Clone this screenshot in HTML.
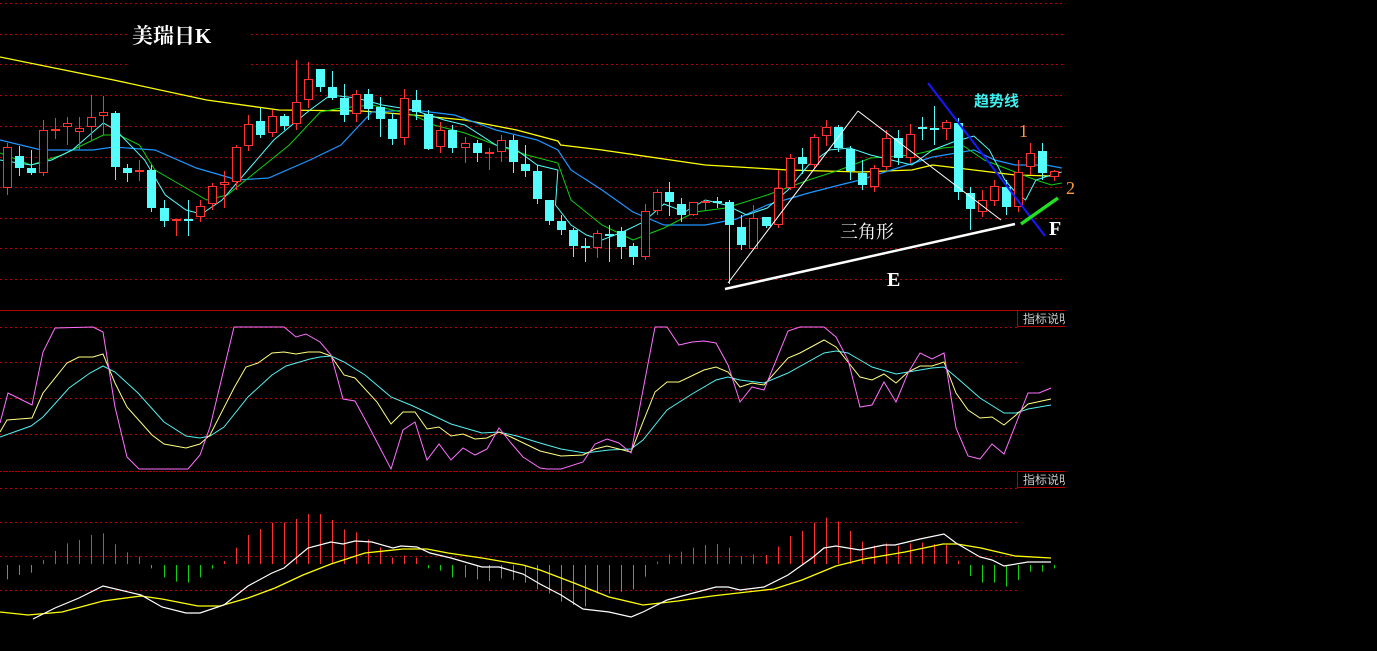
<!DOCTYPE html>
<html><head><meta charset="utf-8"><style>
html,body{margin:0;padding:0;background:#000;width:1377px;height:651px;overflow:hidden}
svg{position:absolute;left:0;top:0}
.t{font-family:"Liberation Serif","Noto Serif CJK SC",serif}
</style></head><body>
<svg id="s" width="1377" height="651" viewBox="0 0 1377 651" xmlns="http://www.w3.org/2000/svg">
<g id="grid" stroke="#b80000" stroke-width="1" stroke-dasharray="2 3"></g>
<line x1="0" y1="310.5" x2="1065" y2="310.5" stroke="#b00000"/>
<line x1="0" y1="471.5" x2="1065" y2="471.5" stroke="#b00000" stroke-dasharray="2 1"/>
<rect x="1017.5" y="310.5" width="50" height="16" fill="#000" stroke="#b00000"/>
<rect x="1017.5" y="471.5" width="50" height="16" fill="#000" stroke="#b00000"/>
<text x="1023" y="323" fill="#c8c8c8" font-size="12" font-family="'Liberation Sans','Noto Sans CJK SC',sans-serif">指标说明</text>
<text x="1023" y="484" fill="#c8c8c8" font-size="12" font-family="'Liberation Sans','Noto Sans CJK SC',sans-serif">指标说明</text>
<rect x="1065" y="305" width="12" height="190" fill="#000"/>
<g id="ma" fill="none" stroke-width="1.2"></g>
<g id="cd"></g>
<g id="kdj" fill="none" stroke-width="1"></g>
<g id="macd"></g>
<text class="t" x="132" y="43" fill="#fff" font-size="21" font-weight="bold">美瑞日K</text>
<line x1="728" y1="283" x2="858" y2="111" stroke="#fff" stroke-width="1"/>
<line x1="858" y1="111" x2="1001" y2="220" stroke="#fff" stroke-width="1"/>
<line x1="725" y1="289" x2="1015" y2="224" stroke="#fff" stroke-width="2.5"/>
<line x1="928" y1="83" x2="1045" y2="236" stroke="#1818ff" stroke-width="2"/>
<line x1="1021" y1="224" x2="1058" y2="198" stroke="#22e022" stroke-width="3.5"/>
<text x="974" y="106" fill="#40f0f0" font-size="15" font-weight="bold" font-family="'Liberation Sans','Noto Sans CJK SC',sans-serif">趋势线</text>
<text class="t" x="1019" y="137" fill="#ff9a3c" font-size="18">1</text>
<text class="t" x="1066" y="194" fill="#ff9a3c" font-size="18">2</text>
<text class="t" x="1049" y="235" fill="#fff" font-size="20" font-weight="bold">F</text>
<text class="t" x="840" y="238" fill="#fff" font-size="18">三角形</text>
<text class="t" x="887" y="286" fill="#fff" font-size="20" font-weight="bold">E</text>
</svg>
<script>
var NS="http://www.w3.org/2000/svg";
function el(p,t,a){var e=document.createElementNS(NS,t);for(var k in a)e.setAttribute(k,a[k]);p.appendChild(e);return e;}
var g=document.getElementById('grid');
[3,34,64,95,126,157,187,218,248,279].forEach(function(y){
 if(y==34||y==64){el(g,'line',{x1:0,y1:y+.5,x2:130,y2:y+.5});el(g,'line',{x1:251,y1:y+.5,x2:1065,y2:y+.5});}
 else el(g,'line',{x1:0,y1:y+.5,x2:1065,y2:y+.5});});
[327,362,398,434,488,522,556,590].forEach(function(y){el(g,'line',{x1:0,y1:y+.5,x2:1017,y2:y+.5});});
function fx1(a){return a.map(function(p){return [p[0]*1.0331,p[1]]});}
function fx2(a){return a.map(function(p){return [540+(p[0]-540)*1.0331,p[1]]});}
function pl(par,pts,col,w){el(par,'polyline',{points:pts.map(function(p){return p.join(',')}).join(' '),stroke:col,'stroke-width':w||1,fill:'none'});}
var ma=document.getElementById('ma');
var Y=fx1([[0,57],[110,80],[200,100],[270,110],[350,111],[400,115],[450,120],[500,130],[540,141]]).concat(fx2([[560,145],[600,150],[700,165],[780,170],[850,172],[900,170],[920,165],[960,170],[1000,175],[1035,176]]));
var B=fx1([[0,140],[40,150],[90,150],[110,147],[150,150],[190,168],[230,180],[260,178],[300,160],[330,145],[360,112],[400,110],[440,115],[480,130],[520,140],[540,150]]).concat(fx2([[570,170],[600,190],[630,212],[660,225],[700,225],[730,219],[760,205],[800,193],[830,185],[850,180],[880,170],[920,157],[960,150],[980,160],[1000,165],[1030,165],[1045,168]]));
var G=fx1([[0,153],[30,165],[60,155],[80,145],[100,135],[115,135],[135,145],[150,170],[175,185],[200,200],[220,195],[250,170],[280,145],[310,112],[330,108],[360,105],[400,115],[420,125],[450,133],[480,145],[510,155],[540,163]]).concat(fx2([[570,200],[600,225],[630,240],[660,228],[690,212],[720,208],[760,195],[800,180],[830,170],[860,158],[900,155],[930,148],[950,146],[970,160],[1000,172],[1020,180],[1035,185],[1045,183]]));
var C=fx1([[0,160],[30,165],[50,160],[70,150],[100,123],[112,130],[140,160],[160,195],[180,210],[195,214],[215,200],[240,170],[265,140],[300,110],[320,95],[345,98],[370,105],[400,110],[430,120],[450,125],[480,145],[500,150],[520,165],[540,170]]).concat(fx2([[555,205],[570,225],[585,235],[600,240],[620,232],[640,222],[660,204],[680,212],[700,200],[720,205],[740,215],[760,208],[780,190],[800,165],[820,150],[840,148],[860,155],[880,160],[900,165],[920,150],[940,142],[960,136],[975,150],[990,180],[1000,192],[1010,200],[1020,180],[1035,175],[1045,172]]));
pl(ma,Y,'#ffff00',1.3);pl(ma,B,'#1e96ff',1.2);pl(ma,G,'#10d010',1);pl(ma,C,'#54fcfc',1);
var D=[[147,188,143,195,'r'],[156,168,146,176,'c'],[168,173,150,175,'c'],[130,173,120,176,'r'],[129,131,118,139,'r'],[123,127,117,145,'r'],[128,132,117,150,'r'],[117,127,95,140,'r'],[112,116,96,135,'r'],[113,167,111,180,'c'],[168,173,164,182,'c'],[170,172,160,181,'r'],[170,208,165,212,'c'],[208,221,200,227,'c'],[219,221,219,236,'r'],[219,221,200,236,'c'],[206,217,200,222,'r'],[186,204,183,210,'r'],[182,185,171,208,'r'],[147,182,145,190,'r'],[124,146,115,151,'r'],[121,135,108,138,'c'],[116,133,110,137,'r'],[116,126,114,130,'c'],[102,124,60,130,'r'],[79,100,62,108,'r'],[69,87,69,92,'c'],[87,98,71,100,'c'],[98,115,84,122,'c'],[94,114,90,122,'r'],[94,109,89,120,'c'],[107,119,97,137,'c'],[119,139,113,145,'c'],[98,138,89,145,'r'],[100,112,90,120,'c'],[114,149,110,150,'c'],[130,147,122,153,'r'],[130,148,125,153,'c'],[143,148,137,163,'r'],[143,153,140,162,'c'],[152,154,148,170,'r'],[140,152,135,162,'r'],[140,162,135,173,'c'],[164,171,145,177,'c'],[171,199,165,204,'c'],
[200,221,200,225,'c'],[221,230,215,235,'c'],[230,246,228,257,'c'],[246,248,238,262,'c'],[233,248,230,258,'r'],[234,236,225,262,'c'],[231,247,227,259,'c'],[246,257,243,265,'c'],[211,257,204,260,'r'],[192,211,189,215,'r'],[192,202,182,216,'c'],[204,215,198,222,'c'],[202,215,203,216,'r'],[201,203,200,210,'r'],[201,203,197,208,'c'],[202,225,200,284,'c'],[227,245,215,250,'c'],[218,249,205,250,'r'],[217,226,217,228,'c'],[188,225,170,228,'r'],[158,188,154,190,'r'],[157,164,148,174,'c'],[137,165,134,168,'r'],[127,136,120,146,'r'],[127,148,125,152,'c'],[149,171,146,180,'c'],[173,185,160,190,'c'],[168,187,165,192,'r'],[138,167,130,170,'r'],[138,158,130,165,'c'],[134,158,124,163,'r'],[127,129,117,140,'c'],[128,130,106,145,'c'],[122,129,120,140,'r'],[123,192,118,200,'c'],[193,209,187,230,'c'],[200,212,190,217,'r'],[186,201,180,206,'r'],[187,207,180,215,'c'],[172,207,160,212,'r'],[153,167,143,175,'r'],[151,173,143,180,'c'],[171,177,170,181,'r']];
var cd=document.getElementById('cd');
D.forEach(function(d,i){var x=Math.round(7+12.04*i);var col=d[4]=='r'?'#ff3232':'#54fcfc';
 var h=Math.max(d[1]-d[0],1);
 if(d[4]=='r'){el(cd,'line',{x1:x+.5,y1:d[2],x2:x+.5,y2:d[0],stroke:col});el(cd,'line',{x1:x+.5,y1:d[0]+h,x2:x+.5,y2:d[3],stroke:col});
  if(h<3)el(cd,'rect',{x:x-4,y:d[0],width:9,height:2,fill:col});else el(cd,'rect',{x:x-3.5,y:d[0]+.5,width:8,height:h-1,fill:'#000',stroke:col});}
 else{el(cd,'line',{x1:x+.5,y1:d[2],x2:x+.5,y2:d[3],stroke:col});el(cd,'rect',{x:x-4,y:d[0],width:9,height:Math.max(h,2),fill:col});}
});
var k=document.getElementById('kdj');
var J=[[0,423],[8,393],[32,405],[43,352],[55,328],[93,327],[103,332],[115,407],[127,457],[139,469],[188,469],[200,455],[210,427],[234,327],[284,327],[296,337],[306,334],[320,342],[331,355],[343,399],[355,401],[367,423],[391,469],[403,430],[415,422],[427,460],[439,444],[451,460],[463,448],[475,455],[487,449],[499,428],[511,443],[523,457],[540,468],[547,469],[561,469],[583,462],[595,444],[607,439],[619,443],[631,453],[655,327],[667,327],[679,345],[692,342],[704,341],[716,343],[728,365],[740,402],[752,387],[764,390],[788,331],[800,327],[824,327],[836,337],[848,360],[860,407],[872,405],[884,382],[896,402],[908,373],[920,353],[932,359],[944,353],[956,428],[968,456],[980,459],[992,444],[1004,454],[1028,393],[1039,393],[1051,388]];
var K=[[0,432],[7,420],[32,418],[43,393],[67,363],[79,357],[93,357],[103,354],[115,383],[127,407],[152,435],[164,444],[186,448],[200,444],[210,435],[234,388],[246,367],[258,363],[272,353],[284,352],[296,354],[308,352],[320,352],[331,356],[344,375],[355,378],[377,402],[391,424],[403,412],[415,412],[427,429],[439,427],[451,436],[463,434],[475,439],[487,438],[499,432],[511,437],[540,451],[561,456],[583,455],[595,449],[607,446],[631,452],[655,392],[667,382],[679,382],[704,370],[716,367],[728,372],[740,387],[752,383],[764,385],[788,358],[800,353],[824,340],[836,347],[860,377],[872,380],[884,374],[896,383],[908,372],[920,366],[932,366],[944,362],[956,393],[968,410],[980,418],[992,417],[1004,425],[1016,415],[1028,404],[1051,399]];
var DD=[[0,437],[31,426],[43,417],[69,388],[90,373],[103,366],[115,372],[138,393],[164,422],[186,436],[200,438],[210,436],[224,427],[248,397],[272,375],[286,366],[310,359],[320,357],[331,356],[344,362],[365,375],[391,397],[413,406],[451,424],[482,433],[499,432],[517,436],[540,443],[561,449],[585,453],[609,450],[631,449],[643,440],[667,410],[692,394],[716,380],[728,377],[740,380],[764,383],[788,373],[824,353],[836,351],[848,353],[860,360],[872,367],[896,374],[908,372],[932,368],[944,367],[956,377],[980,398],[1004,413],[1016,413],[1028,409],[1051,405]];
pl(k,DD,'#54f0f0');pl(k,K,'#ffff80');pl(k,J,'#ff70ff');
var M=[838,825,818,780,753,730,720,705,700,733,757,770,805,832,845,848,832,806,783,743,705,687,668,668,657,642,642,660,688,697,718,742,773,767,773,805,812,832,832,838,843,835,840,848,868,
880,905,915,920,880,880,875,868,830,785,763,755,743,735,732,743,768,763,765,740,708,693,668,653,665,693,725,737,730,737,730,728,732,735,782,828,848,848,860,840,815,815,805];
var mc=document.getElementById('macd');
M.forEach(function(z,i){var x=Math.round(7+12.04*i)+.5;var y=300+z/3;
 if(y<564)el(mc,'line',{x1:x,y1:y,x2:x,y2:564,stroke:'#ff3030'});else el(mc,'line',{x1:x,y1:565,x2:x,y2:y,stroke:'#10d010'});});
var DIF=[[33,619],[55,608],[79,598],[103,586],[141,595],[162,607],[186,613],[200,613],[224,605],[248,586],[272,573],[284,568],[308,548],[331,542],[343,544],[355,541],[372,542],[393,548],[401,546],[417,547],[430,553],[451,558],[482,567],[499,567],[523,574],[540,584],[561,595],[583,609],[609,612],[631,617],[643,612],[667,600],[716,587],[728,587],[740,590],[764,587],[788,575],[812,558],[824,548],[836,546],[860,550],[884,545],[895,545],[920,539],[944,534],[956,543],[980,557],[992,560],[1004,566],[1028,562],[1051,562]];
var DEA=[[0,612],[28,615],[62,612],[103,601],[141,596],[162,599],[198,606],[220,606],[248,598],[275,588],[303,575],[331,564],[365,553],[403,549],[427,549],[448,553],[482,558],[523,565],[540,570],[574,583],[609,597],[643,605],[678,601],[712,596],[747,592],[774,589],[802,580],[836,566],[864,559],[905,552],[943,544],[957,544],[981,548],[1015,556],[1051,558]];
pl(mc,DEA,'#ffff00',1.3);pl(mc,DIF,'#ffffff',1.2);
</script>
</body></html>
